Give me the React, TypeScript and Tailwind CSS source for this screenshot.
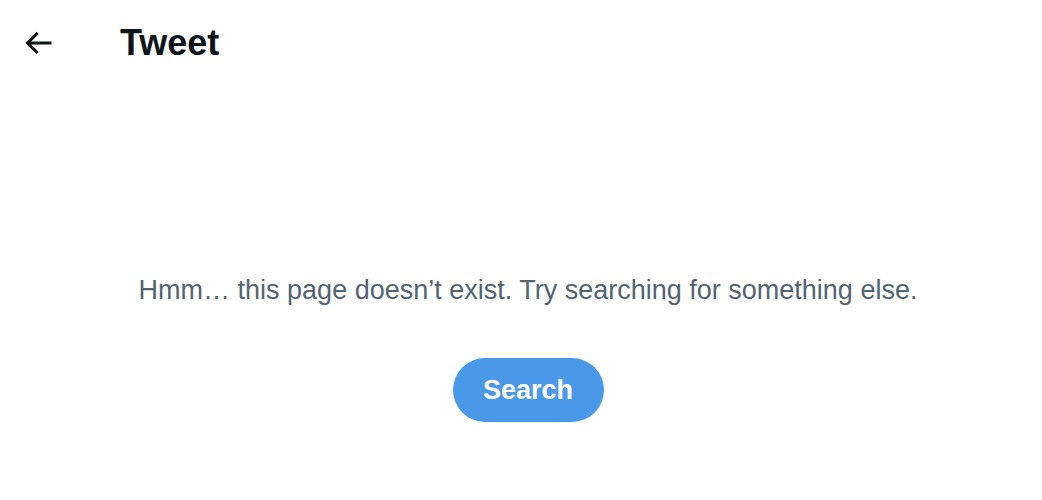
export default function App() {
  return (
    <div className="w-[1042px] h-[500px] bg-white font-['Liberation_Sans',Arial,sans-serif] text-[#0f1419]">
      <div className="flex items-center h-[86px] pl-[20px]">
        <button className="flex items-center justify-center w-[36px] h-[36px]">
          <svg viewBox="0 0 24 24" className="w-[36px] h-[36px]" fill="currentColor">
            <path d="M7.414 13l5.043 5.04-1.414 1.42L3.586 12l7.457-7.46 1.414 1.42L7.414 11H21v2H7.414z" />
          </svg>
        </button>
        <h1 className="ml-[64px] text-[36px] font-bold leading-none">Tweet</h1>
      </div>
      <div className="flex flex-col items-center pt-[176px] pl-[14px]">
        <p className="text-[27px] text-[#536471] leading-[56px]">
          Hmm… this page doesn’t exist. Try searching for something else.
        </p>
        <button className="mt-[40px] w-[151px] h-[64px] rounded-full bg-[#4a99e9] text-white text-[27px] font-bold">
          Search
        </button>
      </div>
    </div>
  );
}
